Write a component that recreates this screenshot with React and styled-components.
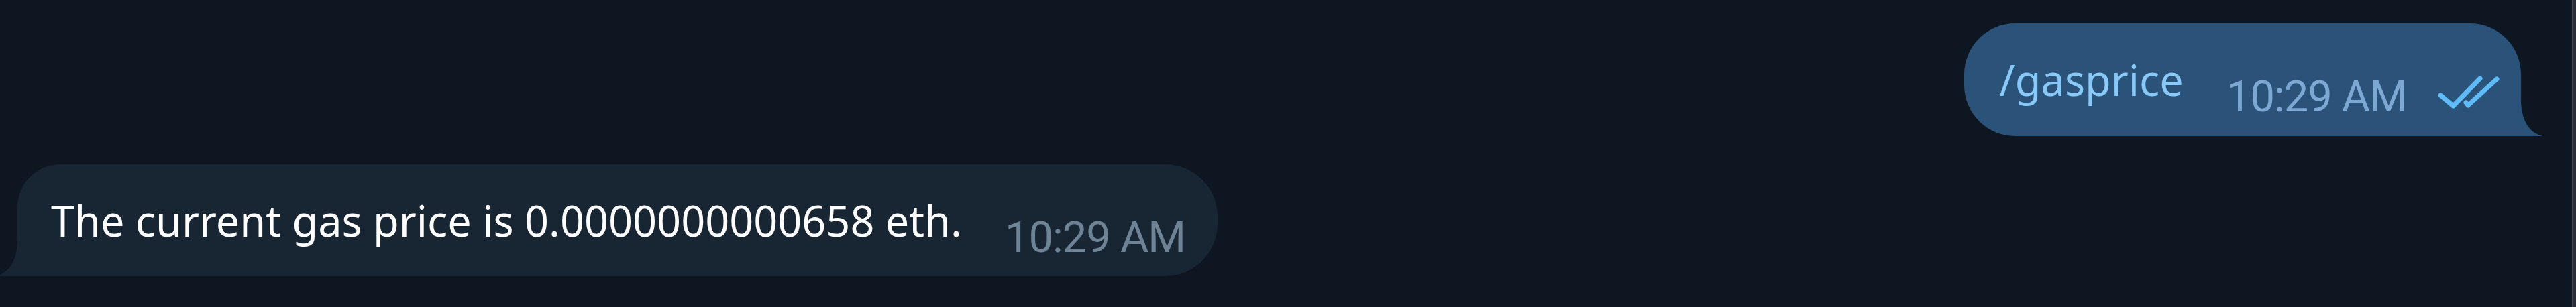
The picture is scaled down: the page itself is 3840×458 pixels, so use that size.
import styled, { createGlobalStyle } from "styled-components";

const GlobalStyle = createGlobalStyle`
  body {
    margin: 0;
    background: #0e1621;
    overflow: hidden;
  }
`;

export default function App() {
  return (
    <>
      <GlobalStyle />
      <Screen>
        <Chat>
          <Row out>
            <Bubble out>
              <Text out>/gasprice</Text>
              <Meta>
                <Time out>10:29 AM</Time>
                <Checks />
              </Meta>
              <Tail out />
            </Bubble>
          </Row>
          <Row>
            <Bubble>
              <Text>The current gas price is 0.0000000000658 eth.</Text>
              <Meta>
                <Time>10:29 AM</Time>
              </Meta>
              <Tail />
            </Bubble>
          </Row>
        </Chat>
        <Scrollbar />
      </Screen>
    </>
  );
}

function Checks() {
  return (
    <CheckIcon width="96" height="55" viewBox="0 0 96 55">
      <path d="M6 32 L25 48 L65 7" />
      <path d="M44 43 L47 47 L90 8" />
    </CheckIcon>
  );
}

function Tail({ out }) {
  return (
    <TailSvg out={out} width="32" height="56" viewBox="0 0 32 56">
      {out ? (
        <path d="M0 0 C0 30 10 50 32 56 L0 56 Z" />
      ) : (
        <path d="M32 0 C32 30 22 50 0 56 L32 56 Z" />
      )}
    </TailSvg>
  );
}

const Screen = styled.div`
  display: flex;
  width: 3840px;
  height: 458px;
  background: #0e1621;
`;

const Chat = styled.div`
  flex: 1;
  display: flex;
  flex-direction: column;
  gap: 42px;
  padding: 35px 76px 0 26px;
`;

const Row = styled.div`
  display: flex;
  justify-content: ${(props) => (props.out ? "flex-end" : "flex-start")};
`;

const Bubble = styled.div`
  position: relative;
  display: flex;
  align-items: flex-start;
  padding: ${(props) => (props.out ? "42px 30px 26px 52px" : "42px 48px 25px 50px")};
  background: ${(props) => (props.out ? "#2b5278" : "#182533")};
  border-radius: ${(props) => (props.out ? "76px 76px 0 76px" : "64px 78px 78px 0")};
`;

const Text = styled.span`
  font-family: "Noto Sans", sans-serif;
  font-size: 63px;
  line-height: 84px;
  margin-bottom: 16px;
  white-space: nowrap;
  color: ${(props) => (props.out ? "#88c9f9" : "#ffffff")};
`;

const Meta = styled.div`
  display: flex;
  align-items: flex-start;
  align-self: flex-end;
  gap: 44px;
  margin-left: 64px;
`;

const Time = styled.span`
  font-family: Roboto, sans-serif;
  font-size: 65px;
  line-height: 65px;
  letter-spacing: -1px;
  white-space: nowrap;
  color: ${(props) => (props.out ? "#7ea8d4" : "#6f8396")};
`;

const CheckIcon = styled.svg`
  margin-top: -2px;
  fill: none;
  stroke: #5fbcf8;
  stroke-width: 7;
  stroke-linecap: round;
  stroke-linejoin: round;
`;

const TailSvg = styled.svg`
  position: absolute;
  bottom: 0;
  ${(props) => (props.out ? "right: -32px;" : "left: -32px;")}
  fill: ${(props) => (props.out ? "#2b5278" : "#182533")};
`;

const Scrollbar = styled.div`
  width: 4px;
  height: 458px;
  border-left: 2px solid #454b54;
  background: #2a2f37;
`;
